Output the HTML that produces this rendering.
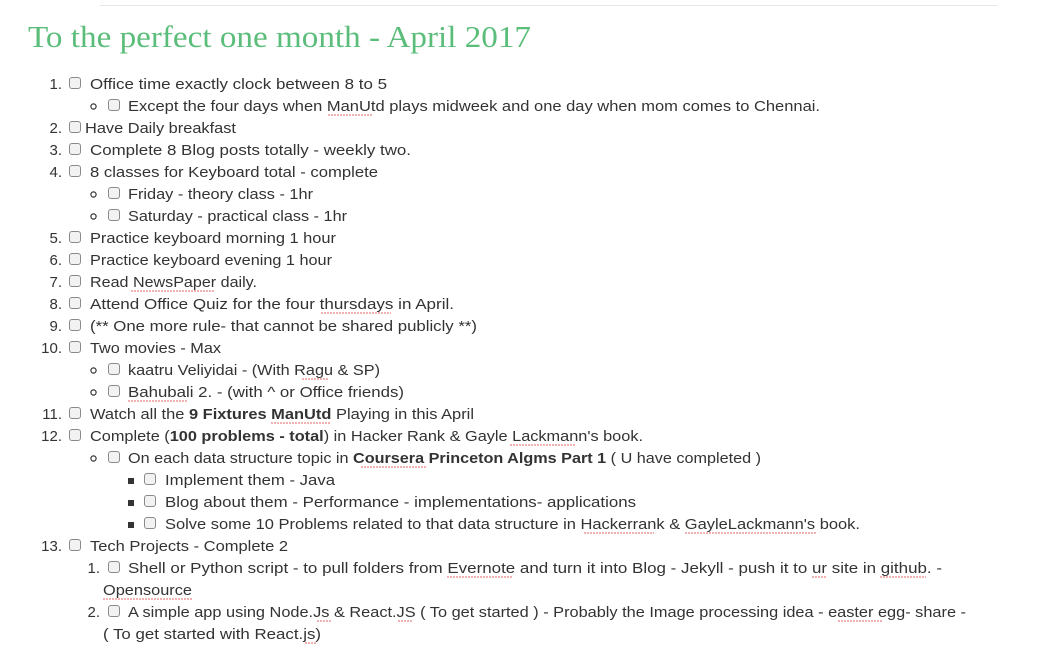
<!DOCTYPE html>
<html><head><meta charset="utf-8"><style>
html,body{margin:0;padding:0;background:#fff;width:1043px;height:661px;overflow:hidden}
svg{display:block}
text{font-family:"Liberation Sans",sans-serif;font-size:15px;fill:#333}
.t{font-family:"Liberation Serif",serif;font-size:31px;fill:#5bbd7a}
.b{font-weight:bold}
</style></head><body>
<svg width="1043" height="661" xmlns="http://www.w3.org/2000/svg">
<defs>
<g id="cb"><rect x="0.5" y="0.5" width="11" height="11" rx="2.5" fill="#f2f2f2" stroke="#8a8a8a"/></g>
</defs>
<line x1="100" y1="5.5" x2="997" y2="5.5" stroke="#e6e6e6"/>
<text class="t" x="28" y="47" textLength="503" lengthAdjust="spacingAndGlyphs">To the perfect one month - April 2017</text>

<g text-anchor="end">
<text x="62" y="89">1.</text>
<text x="62" y="133">2.</text>
<text x="62" y="155">3.</text>
<text x="62" y="177">4.</text>
<text x="62" y="243">5.</text>
<text x="62" y="265">6.</text>
<text x="62" y="287">7.</text>
<text x="62" y="309">8.</text>
<text x="62" y="331">9.</text>
<text x="62" y="353">10.</text>
<text x="62" y="419">11.</text>
<text x="62" y="441">12.</text>
<text x="62" y="551">13.</text>
<text x="100" y="573">1.</text>
<text x="100" y="617">2.</text>
</g>

<g fill="none" stroke="#333" stroke-width="1.2">
<circle cx="93.5" cy="106.5" r="2.6"/>
<circle cx="93.5" cy="194.5" r="2.6"/>
<circle cx="93.5" cy="216.5" r="2.6"/>
<circle cx="93.5" cy="370.5" r="2.6"/>
<circle cx="93.5" cy="392.5" r="2.6"/>
<circle cx="93.5" cy="458.5" r="2.6"/>
</g>
<g fill="#333">
<rect x="128" y="478" width="6" height="6"/>
<rect x="128" y="500" width="6" height="6"/>
<rect x="128" y="522" width="6" height="6"/>
</g>

<use href="#cb" x="69" y="77"/>
<use href="#cb" x="108" y="99"/>
<use href="#cb" x="69" y="121"/>
<use href="#cb" x="69" y="143"/>
<use href="#cb" x="69" y="165"/>
<use href="#cb" x="108" y="187"/>
<use href="#cb" x="108" y="209"/>
<use href="#cb" x="69" y="231"/>
<use href="#cb" x="69" y="253"/>
<use href="#cb" x="69" y="275"/>
<use href="#cb" x="69" y="297"/>
<use href="#cb" x="69" y="319"/>
<use href="#cb" x="69" y="341"/>
<use href="#cb" x="108" y="363"/>
<use href="#cb" x="108" y="385"/>
<use href="#cb" x="69" y="407"/>
<use href="#cb" x="69" y="429"/>
<use href="#cb" x="108" y="451"/>
<use href="#cb" x="144" y="473"/>
<use href="#cb" x="144" y="495"/>
<use href="#cb" x="144" y="517"/>
<use href="#cb" x="69" y="539"/>
<use href="#cb" x="108" y="561"/>
<use href="#cb" x="108" y="605"/>

<g>
<text x="90" y="89" textLength="297" lengthAdjust="spacingAndGlyphs">Office time exactly clock between 8 to 5</text>
<text x="128" y="111" textLength="692" lengthAdjust="spacingAndGlyphs">Except the four days when ManUtd plays midweek and one day when mom comes to Chennai.</text>
<text x="85" y="133" textLength="151" lengthAdjust="spacingAndGlyphs">Have Daily breakfast</text>
<text x="90" y="155" textLength="321" lengthAdjust="spacingAndGlyphs">Complete 8 Blog posts totally - weekly two.</text>
<text x="90" y="177" textLength="288" lengthAdjust="spacingAndGlyphs">8 classes for Keyboard total - complete</text>
<text x="128" y="199" textLength="185" lengthAdjust="spacingAndGlyphs">Friday - theory class - 1hr</text>
<text x="128" y="221" textLength="219" lengthAdjust="spacingAndGlyphs">Saturday - practical class - 1hr</text>
<text x="90" y="243" textLength="246" lengthAdjust="spacingAndGlyphs">Practice keyboard morning 1 hour</text>
<text x="90" y="265" textLength="242" lengthAdjust="spacingAndGlyphs">Practice keyboard evening 1 hour</text>
<text x="90" y="287" textLength="167" lengthAdjust="spacingAndGlyphs">Read NewsPaper daily.</text>
<text x="90" y="309" textLength="364" lengthAdjust="spacingAndGlyphs">Attend Office Quiz for the four thursdays in April.</text>
<text x="90" y="331" textLength="387" lengthAdjust="spacingAndGlyphs">(** One more rule- that cannot be shared publicly **)</text>
<text x="90" y="353" textLength="131" lengthAdjust="spacingAndGlyphs">Two movies - Max</text>
<text x="128" y="375" textLength="252" lengthAdjust="spacingAndGlyphs">kaatru Veliyidai - (With Ragu &amp; SP)</text>
<text x="128" y="397" textLength="276" lengthAdjust="spacingAndGlyphs">Bahubali 2. - (with ^ or Office friends)</text>
<text x="90" y="419" textLength="384" lengthAdjust="spacingAndGlyphs">Watch all the <tspan class="b">9 Fixtures ManUtd</tspan> Playing in this April</text>
<text x="90" y="441" textLength="553" lengthAdjust="spacingAndGlyphs">Complete (<tspan class="b">100 problems - total</tspan>) in Hacker Rank &amp; Gayle Lackmann's book.</text>
<text x="128" y="463" textLength="633" lengthAdjust="spacingAndGlyphs">On each data structure topic in <tspan class="b">Coursera Princeton Algms Part 1</tspan> ( U have completed )</text>
<text x="165" y="485" textLength="170" lengthAdjust="spacingAndGlyphs">Implement them - Java</text>
<text x="165" y="507" textLength="471" lengthAdjust="spacingAndGlyphs">Blog about them - Performance - implementations- applications</text>
<text x="165" y="529" textLength="695" lengthAdjust="spacingAndGlyphs">Solve some 10 Problems related to that data structure in Hackerrank &amp; GayleLackmann's book.</text>
<text x="90" y="551" textLength="198" lengthAdjust="spacingAndGlyphs">Tech Projects - Complete 2</text>
<text x="128" y="573" textLength="814" lengthAdjust="spacingAndGlyphs">Shell or Python script - to pull folders from Evernote and turn it into Blog - Jekyll - push it to ur site in github. -</text>
<text x="103" y="595" textLength="89" lengthAdjust="spacingAndGlyphs">Opensource</text>
<text x="128" y="617" textLength="838" lengthAdjust="spacingAndGlyphs">A simple app using Node.Js &amp; React.JS ( To get started ) - Probably the Image processing idea - easter egg- share -</text>
<text x="103" y="639" textLength="218" lengthAdjust="spacingAndGlyphs">( To get started with React.js)</text>
</g>

<g fill="none" stroke="#d33" stroke-width="0.8" stroke-dasharray="2 1">
<line x1="328" y1="115" x2="373" y2="115"/>
<line x1="131" y1="291" x2="215" y2="291"/>
<line x1="321" y1="313" x2="391" y2="313"/>
<line x1="302" y1="379" x2="329" y2="379"/>
<line x1="128" y1="401" x2="187" y2="401"/>
<line x1="271" y1="423" x2="330" y2="423"/>
<line x1="510" y1="445" x2="575" y2="445"/>
<line x1="361" y1="467" x2="427" y2="467"/>
<line x1="584" y1="533" x2="654" y2="533"/>
<line x1="685" y1="533" x2="817" y2="533"/>
<line x1="447" y1="577" x2="513" y2="577"/>
<line x1="812" y1="577" x2="826" y2="577"/>
<line x1="880" y1="577" x2="926" y2="577"/>
<line x1="103" y1="599" x2="192" y2="599"/>
<line x1="317" y1="621" x2="331" y2="621"/>
<line x1="398" y1="621" x2="413" y2="621"/>
<line x1="838" y1="621" x2="883" y2="621"/>
<line x1="305" y1="643" x2="317" y2="643"/>
</g>
</svg>
</body></html>
